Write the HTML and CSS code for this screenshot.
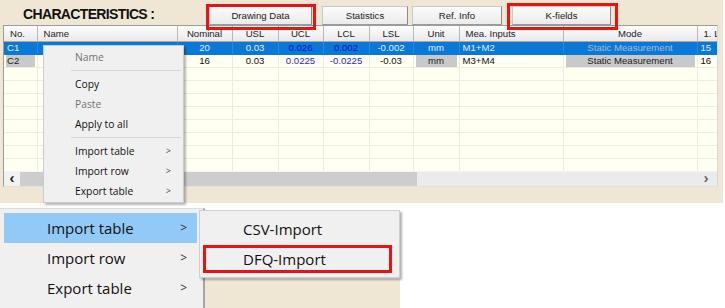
FILE: index.html
```html
<!DOCTYPE html>
<html>
<head>
<meta charset="utf-8">
<link rel="stylesheet" href="styles.css">
</head>
<body>
<section class="top">
  <div class="head">
    <h1 class="title">CHARACTERISTICS :</h1>
    <div class="tabs">
      <div class="tab tab-drawing">Drawing Data<span class="mark mark-drawing"></span></div>
      <div class="tab tab-stats">Statistics</div>
      <div class="tab tab-ref">Ref. Info</div>
      <div class="tab tab-k">K-fields<span class="mark mark-k"></span></div>
    </div>
  </div>
  <div class="grid-wrap">
    <table class="grid">
      <colgroup>
        <col class="c-no"><col class="c-name"><col class="c-nom"><col class="c-usl"><col class="c-ucl"><col class="c-lcl"><col class="c-lsl"><col class="c-unit"><col class="c-mea"><col class="c-mode"><col class="c-one">
      </colgroup>
      <thead>
        <tr>
          <th class="left">No.</th><th class="left">Name</th><th>Nominal</th><th>USL</th><th>UCL</th><th>LCL</th><th>LSL</th><th>Unit</th><th class="left">Mea. Inputs</th><th>Mode</th><th class="left">1. L</th>
        </tr>
      </thead>
      <tbody>
        <tr class="sel">
          <td class="left"><span class="cellbox">C1</span></td><td></td><td>20</td><td>0.03</td><td class="ctl">0.026</td><td class="ctl">0.002</td><td>-0.002</td><td>mm</td><td class="left">M1+M2</td><td class="mode">Static Measurement</td><td class="left">15</td>
        </tr>
        <tr>
          <td class="left"><span class="cellbox gray">C2</span></td><td class="left"><span class="flag"></span></td><td>16</td><td>0.03</td><td class="ctl">0.0225</td><td class="ctl">-0.0225</td><td>-0.03</td><td><span class="cellbox gray center">mm</span></td><td class="left">M3+M4</td><td><span class="cellbox gray center">Static Measurement</span></td><td class="left">16</td>
        </tr>
        <tr><td></td><td></td><td></td><td></td><td></td><td></td><td></td><td></td><td></td><td></td><td></td></tr>
        <tr><td></td><td></td><td></td><td></td><td></td><td></td><td></td><td></td><td></td><td></td><td></td></tr>
        <tr><td></td><td></td><td></td><td></td><td></td><td></td><td></td><td></td><td></td><td></td><td></td></tr>
        <tr><td></td><td></td><td></td><td></td><td></td><td></td><td></td><td></td><td></td><td></td><td></td></tr>
        <tr><td></td><td></td><td></td><td></td><td></td><td></td><td></td><td></td><td></td><td></td><td></td></tr>
        <tr><td></td><td></td><td></td><td></td><td></td><td></td><td></td><td></td><td></td><td></td><td></td></tr>
        <tr><td></td><td></td><td></td><td></td><td></td><td></td><td></td><td></td><td></td><td></td><td></td></tr>
        <tr><td></td><td></td><td></td><td></td><td></td><td></td><td></td><td></td><td></td><td></td><td></td></tr>
      </tbody>
    </table>
    <div class="hscroll">
      <span class="arrow-l">&lsaquo;</span>
      <span class="thumb"></span>
      <span class="track"></span>
      <span class="arrow-r">&rsaquo;</span>
    </div>
  </div>

  <div class="ctx">
    <div class="item disabled">Name</div>
    <div class="sep"></div>
    <div class="item">Copy</div>
    <div class="item disabled">Paste</div>
    <div class="item">Apply to all</div>
    <div class="sep"></div>
    <div class="item sub">Import table<span class="chev">&gt;</span></div>
    <div class="item sub">Import row<span class="chev">&gt;</span></div>
    <div class="item sub">Export table<span class="chev">&gt;</span></div>
  </div>
</section>

<section class="bottom">
  <div class="menu2">
    <div class="m2-item hot">Import table<span class="chev2">&gt;</span></div>
    <div class="m2-item">Import row<span class="chev2">&gt;</span></div>
    <div class="m2-item">Export table<span class="chev2">&gt;</span></div>
  </div>
  <div class="side">
    <div class="submenu">
      <div class="s-item">CSV-Import</div>
      <div class="s-item">DFQ-Import<span class="mark mark-dfq"></span></div>
    </div>
    <div class="beige"></div>
  </div>
</section>
</body>
</html>
```

FILE: styles.css
```css
* { box-sizing: border-box; }

html, body {
  margin: 0;
  padding: 0;
  background: #ffffff;
}

body {
  width: 725px;
  height: 308px;
  overflow: hidden;
  font-family: "Liberation Sans", Arial, sans-serif;
}

/* ---------- top panel ---------- */
.top {
  position: relative;
  width: 723px;
  height: 203px;
  background: #efe7d3;
}

.head {
  display: flex;
  height: 25px;
}

.title {
  margin: 0;
  width: 209px;
  padding: 6px 0 0 23px;
  font-size: 14px;
  font-weight: bold;
  letter-spacing: -0.65px;
  line-height: 16px;
  color: #111;
}

.tabs {
  display: flex;
  padding-top: 6px;
}

.tab {
  position: relative;
  height: 19px;
  font-size: 9.6px;
  line-height: 17px;
  text-align: center;
  color: #1a1a1a;
  background: linear-gradient(#fbfbfb, #ebebeb);
  border: 1px solid #c8c8c8;
  border-right-color: #8a8a8a;
  border-bottom-color: #9a9a9a;
}

.tab-drawing { width: 103px; }
.tab-stats { width: 86px; margin-left: 10px; }
.tab-ref { width: 90px; margin-left: 4px; }
.tab-k { width: 99px; margin-left: 10px; }

.mark {
  position: absolute;
  border: 3px solid #ee1111;
  pointer-events: none;
}

.mark-drawing { left: -4px; right: -5px; top: -3px; bottom: -6px; }
.mark-k { left: -6px; right: -8px; top: -4px; bottom: -6px; }

/* ---------- grid ---------- */
.grid-wrap {
  margin-left: 3px;
  width: 715px;
  height: 162px;
  border: 1px solid #9c9c9c;
  border-right-color: #d8d8d8;
  border-bottom-color: #e0e0e0;
  background: #fffff2;
  overflow: hidden;
}

.grid {
  width: 733px;
  table-layout: fixed;
  border-collapse: collapse;
  font-size: 9.6px;
}

.c-no { width: 33px; }
.c-name { width: 140px; }
.c-nom { width: 55px; }
.c-usl { width: 46px; }
.c-ucl { width: 45px; }
.c-lcl { width: 46px; }
.c-lsl { width: 44px; }
.c-unit { width: 46px; }
.c-mea { width: 104px; }
.c-mode { width: 134px; }
.c-one { width: 40px; }

.grid th {
  height: 15px;
  padding: 0 3px;
  font-weight: normal;
  color: #222;
  text-align: center;
  white-space: nowrap;
  overflow: hidden;
  background: linear-gradient(#fdfdfd, #e9e9e9);
  border-right: 1px solid #b8b8b8;
  border-bottom: 1px solid #a8a8a8;
}

.grid th.left { text-align: left; padding-left: 6px; }

.grid td {
  height: 13px;
  padding: 0 3px;
  line-height: 12px;
  text-align: center;
  white-space: nowrap;
  overflow: hidden;
  color: #111;
  border-right: 1px solid #ebebe4;
  border-bottom: 1px solid #ededE6;
}

.grid td.left { text-align: left; }

.grid td.ctl { color: #2424e6; }

.grid tr.sel td {
  background: #0a78d6;
  color: #e4eef8;
  border-right-color: #2a88dc;
  border-bottom-color: #0a78d6;
}

.grid tr.sel td.ctl { color: #1010c8; }
.grid tr.sel td.mode { color: #a9bccf; }

.cellbox {
  display: block;
  margin: 0 -1px;
  padding: 0 1px;
}

.cellbox.gray { background: #c9c9c9; color: #1a1a1a; }
.cellbox.center { text-align: center; }

.flag {
  display: inline-block;
  width: 2px;
  height: 8px;
  margin-left: 2px;
  vertical-align: middle;
  background: #f1b56a;
}

/* horizontal scrollbar */
.hscroll {
  display: flex;
  height: 15px;
  margin-top: -1px;
  background: #ebebeb;
  border-top: 1px solid #f4f4f4;
}

.arrow-l, .arrow-r {
  width: 16px;
  font-size: 15px;
  line-height: 12px;
  text-align: center;
  color: #555;
}

.arrow-l { background: #f2f2f2; color: #222; font-weight: bold; }

.thumb {
  width: 397px;
  background: #cdcdcd;
}

.track { flex: 1; }

.arrow-r { width: 22px; color: #666; font-weight: bold; }

/* ---------- context menu ---------- */
.ctx {
  position: absolute;
  left: 43px;
  top: 45px;
  width: 141px;
  height: 158px;
  padding-top: 1px;
  background: #f0f0f0;
  border: 1px solid #cbcbcb;
  box-shadow: 2px 2px 2px rgba(0, 0, 0, 0.28);
  font-family: "Open Sans", "Noto Sans", sans-serif;
  font-size: 10.3px;
  color: #111;
}

.item {
  position: relative;
  height: 20px;
  line-height: 20px;
  padding-left: 31px;
}

.item.disabled { color: #737373; }

.chev {
  position: absolute;
  right: 12px;
  top: 0;
  font-size: 9px;
  color: #444;
}

.sep {
  height: 7px;
  margin: 0 2px 0 27px;
  position: relative;
}

.sep::after {
  content: "";
  position: absolute;
  left: 0;
  right: 0;
  top: 3px;
  border-top: 1px solid #d4d4d4;
}

/* ---------- bottom screenshot ---------- */
.bottom {
  display: flex;
  margin-top: 5px;
  height: 100px;
}

.menu2 {
  width: 205px;
  height: 100px;
  padding: 4px 0 0 4px;
  background: #f0f0f0;
  border-top: 1px solid #dcdcdc;
  border-right: 2px solid #a4a4a4;
  font-family: "Open Sans", "Noto Sans", sans-serif;
  font-size: 15px;
  color: #111;
}

.m2-item {
  position: relative;
  width: 193px;
  height: 30px;
  line-height: 30px;
  padding-left: 43px;
}

.m2-item.hot { background: #91c9f7; }

.chev2 {
  position: absolute;
  right: 10px;
  top: 0;
  font-size: 12px;
  color: #333;
}

.side {
  width: 201px;
  margin-left: -6px;
  display: flex;
  flex-direction: column;
}

.submenu {
  position: relative;
  margin-top: 2px;
  height: 68px;
  padding-top: 3px;
  background: #f0f0f0;
  border: 1px solid #cfcfcf;
  box-shadow: 2px 2px 2px rgba(0, 0, 0, 0.3);
  font-family: "Open Sans", "Noto Sans", sans-serif;
  font-size: 15px;
  color: #111;
}

.s-item {
  position: relative;
  height: 30px;
  line-height: 30px;
  padding-left: 43px;
}

.mark-dfq { left: 3px; right: 7px; top: 1px; bottom: 1px; }

.beige {
  flex: 1;
  margin: 1px 0 0 6px;
  background: #efe7d3;
}
```
